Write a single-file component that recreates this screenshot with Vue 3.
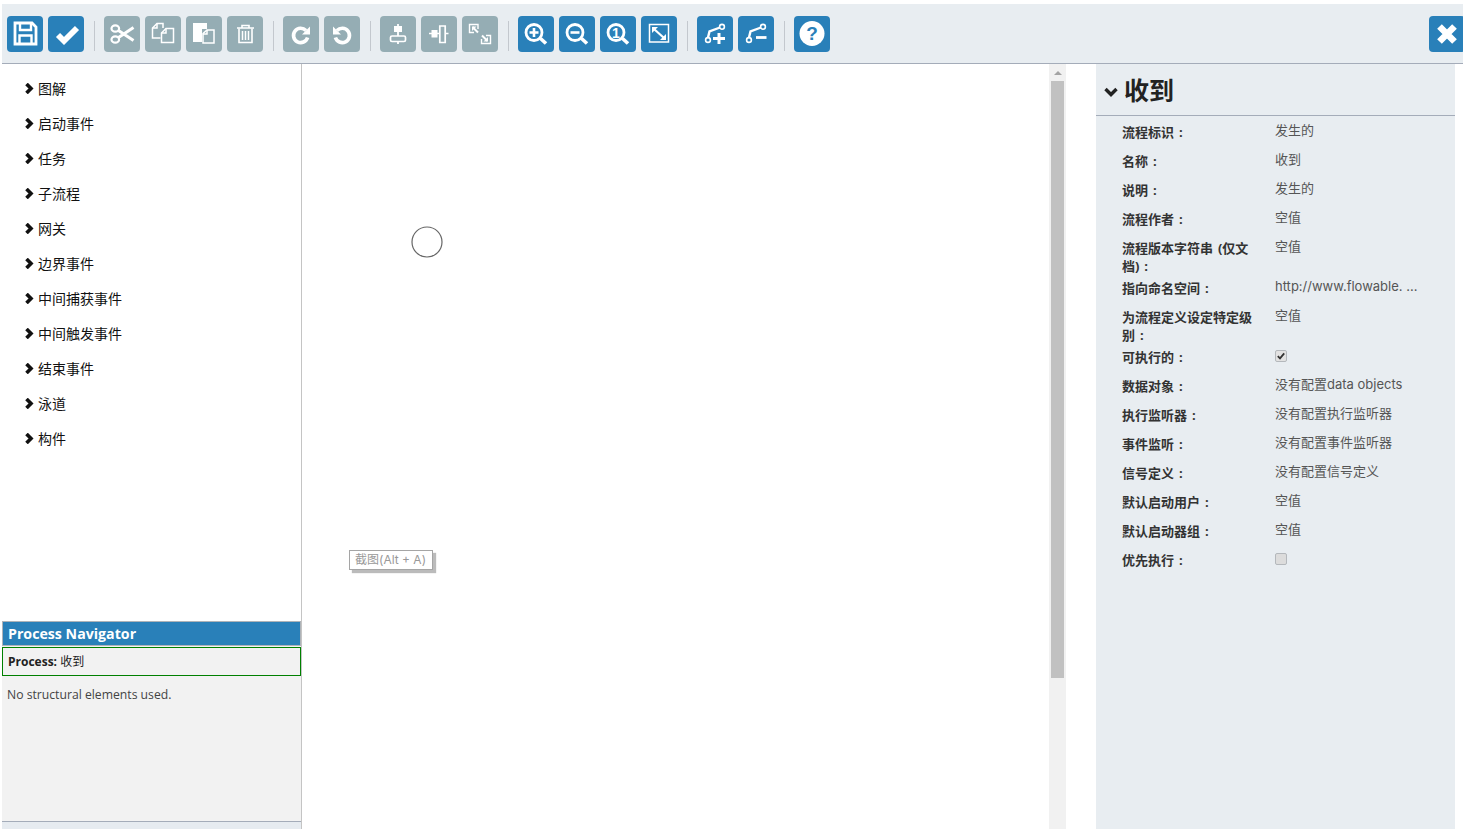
<script setup>
const saveIcon = [
  { d: 'M8 7H25L29 11V28H8Z', w: 2.8 },
  { d: 'M13 7V14H24V7', w: 2.4 },
  { d: 'M12.5 28V19.5H24.5V28', w: 2.4 }
]

const zoomLens = [
  { d: 'M8 16.5a8 8 0 1 0 16 0a8 8 0 1 0-16 0Z', w: 2.8 },
  { d: 'M22.5 22.5L28 27.5', w: 3.6 }
]

const bendPath = [
  { d: 'M11 21.5L12.5 15.5L23 11.5', w: 2.4 },
  { d: 'M8.6 24a2.4 2.4 0 1 0 4.8 0a2.4 2.4 0 1 0-4.8 0Z', w: 1.6 },
  { d: 'M22.6 10.8a2.4 2.4 0 1 0 4.8 0a2.4 2.4 0 1 0-4.8 0Z', w: 1.6 }
]

const groups = [
  [
    { name: 'save', shapes: saveIcon },
    { name: 'validate', shapes: [{ d: 'M10 19L16 25L29 12', w: 5.8 }] }
  ],
  [
    {
      name: 'cut',
      off: true,
      shapes: [
        { d: 'M7.5 12.5a3.8 3.2 0 1 0 7.6 0a3.8 3.2 0 1 0-7.6 0Z', w: 2.2 },
        { d: 'M7.5 23.5a3.8 3.2 0 1 0 7.6 0a3.8 3.2 0 1 0-7.6 0Z', w: 2.2 },
        { d: 'M14.5 14.5L29.5 24.5M14.5 21.5L29.5 11.5', w: 3 }
      ]
    },
    {
      name: 'copy',
      off: true,
      shapes: [
        { d: 'M15.5 22H7.5V12L12 7.5H18V12', w: 1.5 },
        { d: 'M12 7.5V12H7.5', w: 1.5 },
        { d: 'M16.5 17L21 12.5H28.5V26.5H16.5Z', w: 1.5 },
        { d: 'M21 12.5V17H16.5', w: 1.5 }
      ]
    },
    {
      name: 'paste',
      off: true,
      shapes: [
        { d: 'M7 7H21V13H16V26H7Z', fill: true },
        { d: 'M17 17.5L21 14H28V27H17Z', w: 1.5 },
        { d: 'M21 14V18H17', w: 1.5 }
      ]
    },
    {
      name: 'delete',
      off: true,
      shapes: [
        { d: 'M10 12H27M15 11.5V9.5H22V11.5', w: 1.6 },
        { d: 'M12 12.5V26.5H25V12.5', w: 1.6 },
        { d: 'M15.5 15V24M18.5 15V24M21.5 15V24', w: 1.5 }
      ]
    }
  ],
  [
    {
      name: 'redo',
      off: true,
      shapes: [
        { d: 'M23 14.5A7.2 7.2 0 1 0 24.6 21.5', w: 3.6 },
        { d: 'M27 10.5V18.5H19Z', fill: true }
      ]
    },
    {
      name: 'undo',
      off: true,
      shapes: [
        { d: 'M13 14.5A7.2 7.2 0 1 1 11.4 21.5', w: 3.6 },
        { d: 'M9 10.5V18.5H17Z', fill: true }
      ]
    }
  ],
  [
    {
      name: 'align-vertical',
      off: true,
      shapes: [
        { d: 'M14 10H22V16H14Z', fill: true },
        { d: 'M10.5 21.5a1.5 1.5 0 0 1 1.5-1.5H24a1.5 1.5 0 0 1 1.5 1.5V24a1.5 1.5 0 0 1-1.5 1.5H12a1.5 1.5 0 0 1-1.5-1.5Z', w: 1.7 },
        { d: 'M18 8V10M18 16V20M18 25.5V28', w: 1.8 }
      ]
    },
    {
      name: 'align-horizontal',
      off: true,
      shapes: [
        { d: 'M10.5 14H16.5V21.5H10.5Z', fill: true },
        { d: 'M18.8 10H24.2V26.5H18.8Z', w: 1.7 },
        { d: 'M8 17.5H11M16 17.5H19M24 17.5H27.5', w: 1.7 }
      ]
    },
    {
      name: 'same-size',
      off: true,
      shapes: [
        { d: 'M16 13V8.5H7.5V16.5H12', w: 1.4 },
        { d: 'M10.5 11L16 16.5', w: 2 },
        { d: 'M10 10.5H14.5L10 15Z', fill: true },
        { d: 'M19.5 23V27.5H28.5V19.5H24', w: 1.4 },
        { d: 'M20 19.5L25.5 25', w: 2 },
        { d: 'M26 25.5H21.5L26 21Z', fill: true }
      ]
    }
  ],
  [
    {
      name: 'zoom-in',
      shapes: [...zoomLens, { d: 'M11.5 16.5H20.5M16 12V21', w: 2.6 }]
    },
    {
      name: 'zoom-out',
      shapes: [...zoomLens, { d: 'M11.5 16.5H20.5', w: 2.6 }]
    },
    {
      name: 'zoom-actual',
      label: '1',
      shapes: zoomLens
    },
    {
      name: 'zoom-fit',
      shapes: [
        { d: 'M8.5 8.5H27.5V26H8.5Z', w: 1.5 },
        { d: 'M13 13L23 22', w: 2.2 },
        { d: 'M11 11H17L11 17Z', fill: true },
        { d: 'M25 24H19L25 18Z', fill: true }
      ]
    }
  ],
  [
    {
      name: 'bend-add',
      shapes: [...bendPath, { d: 'M16 22.5H28M22 17V28', w: 3 }]
    },
    {
      name: 'bend-remove',
      shapes: [...bendPath, { d: 'M18 21.5H28.5', w: 2.8 }]
    }
  ]
]

const treeItems = ['图解', '启动事件', '任务', '子流程', '网关', '边界事件', '中间捕获事件', '中间触发事件', '结束事件', '泳道', '构件']

const properties = [
  { label: '流程标识 :', value: '发生的' },
  { label: '名称 :', value: '收到' },
  { label: '说明 :', value: '发生的' },
  { label: '流程作者 :', value: '空值' },
  { label: '流程版本字符串 (仅文档) :', value: '空值' },
  { label: '指向命名空间 :', value: 'http://www.flowable. ...' },
  { label: '为流程定义设定特定级别 :', value: '空值' },
  { label: '可执行的 :', check: 'on' },
  { label: '数据对象 :', value: '没有配置data objects' },
  { label: '执行监听器 :', value: '没有配置执行监听器' },
  { label: '事件监听 :', value: '没有配置事件监听器' },
  { label: '信号定义 :', value: '没有配置信号定义' },
  { label: '默认启动用户 :', value: '空值' },
  { label: '默认启动器组 :', value: '空值' },
  { label: '优先执行 :', check: 'off' }
]
</script>

<template>
  <div class="editor">
    <header class="toolbar">
      <template v-for="(group, i) in groups" :key="i">
        <span v-if="i > 0" class="sep"></span>
        <div class="tool-group">
          <button
            v-for="tool in group"
            :key="tool.name"
            type="button"
            class="tool"
            :class="{ off: tool.off }"
            :title="tool.name"
          >
            <svg viewBox="0 0 36 36" width="36" height="36">
              <path
                v-for="(s, n) in tool.shapes"
                :key="n"
                :d="s.d"
                :fill="s.fill ? '#fff' : 'none'"
                :stroke="s.fill ? 'none' : '#fff'"
                :stroke-width="s.w"
              />
              <text v-if="tool.label" x="16" y="21.5" class="glyph-one">{{ tool.label }}</text>
            </svg>
          </button>
        </div>
      </template>
      <span class="sep"></span>
      <button type="button" class="tool" title="help">
        <svg viewBox="0 0 36 36" width="36" height="36">
          <circle cx="18" cy="17.5" r="12.5" fill="#fff" />
          <text x="18" y="24" class="glyph-help">?</text>
        </svg>
      </button>
      <button type="button" class="tool close" title="close">
        <svg viewBox="0 0 36 36" width="36" height="36">
          <path d="M10.5 10.5L25.5 25.5M25.5 10.5L10.5 25.5" fill="none" stroke="#fff" stroke-width="6.6" />
        </svg>
      </button>
    </header>

    <div class="workspace">
      <aside class="sidebar">
        <ul class="tree">
          <li v-for="item in treeItems" :key="item">
            <svg class="chev" viewBox="0 0 10 11" width="10" height="11">
              <path d="M2.5 1L7 5.5L2.5 10" fill="none" stroke="#111" stroke-width="3.6" />
            </svg>
            <span>{{ item }}</span>
          </li>
        </ul>
        <section class="navigator">
          <h2>Process Navigator</h2>
          <div class="nav-process"><b>Process:</b> <span class="cjk">收到</span></div>
          <p>No structural elements used.</p>
        </section>
        <div class="side-foot"></div>
      </aside>

      <main class="canvas">
        <svg class="start-event" viewBox="0 0 32 32" width="32" height="32">
          <circle cx="16" cy="16" r="15" fill="#fff" stroke="#666" stroke-width="1.2" />
        </svg>
        <div class="hint">截图(Alt + A)</div>
      </main>

      <div class="scrollbar">
        <div class="scroll-up"><i></i></div>
        <div class="scroll-thumb"></div>
      </div>

      <section class="props">
        <h1>
          <svg viewBox="0 0 14 10" width="14" height="10">
            <path d="M1.5 2L7 7.5L12.5 2" fill="none" stroke="#222" stroke-width="3.4" />
          </svg>
          <span>收到</span>
        </h1>
        <div class="prop-list">
          <div v-for="prop in properties" :key="prop.label" class="prop">
            <div class="prop-label">{{ prop.label }}</div>
            <div v-if="prop.check" class="prop-check" :class="prop.check">
              <svg v-if="prop.check === 'on'" viewBox="0 0 12 12" width="12" height="12">
                <path d="M2.8 6.2L5 8.4L9.2 3.4" fill="none" stroke="#333" stroke-width="1.8" />
              </svg>
            </div>
            <div v-else class="prop-value">{{ prop.value }}</div>
          </div>
        </div>
      </section>
    </div>
  </div>
</template>

<style>
html,
body {
  margin: 0;
  background: #fff;
  overflow: hidden;
}
</style>

<style scoped>
.editor {
  width: 1463px;
  height: 829px;
  overflow: hidden;
  display: flex;
  flex-direction: column;
  font-family: "Open Sans", "Noto Sans CJK SC", sans-serif;
  font-size: 13px;
  color: #333;
  background: #fff;
}

.toolbar {
  flex: none;
  height: 47px;
  margin: 4px 0 0 2px;
  padding: 12px 0 0 5px;
  display: flex;
  align-items: flex-start;
  background: #e8edf1;
  border-bottom: 1px solid #a4acb9;
}

.tool-group {
  display: flex;
  gap: 5px;
}

.tool {
  flex: none;
  width: 36px;
  height: 36px;
  padding: 0;
  border: none;
  border-radius: 4px;
  background: #2980b9;
  cursor: pointer;
}

.tool svg {
  display: block;
}

.tool.off {
  background: #95adb4;
}

.tool.close {
  margin-left: auto;
  margin-right: -2px;
}

.sep {
  flex: none;
  width: 1px;
  height: 30px;
  margin: 5px 9px 0 10px;
  background: #c3c8ce;
}

.glyph-one,
.glyph-help {
  font-family: "Liberation Sans", sans-serif;
  font-weight: 700;
  text-anchor: middle;
}

.glyph-one {
  font-size: 14px;
  fill: #fff;
}

.glyph-help {
  font-size: 19px;
  fill: #2980b9;
}

.workspace {
  flex: 1;
  min-height: 0;
  display: flex;
}

.sidebar {
  flex: none;
  width: 299px;
  margin-left: 2px;
  display: flex;
  flex-direction: column;
  border-right: 1px solid #c4c4c4;
}

.tree {
  flex: 1;
  margin: 0;
  padding: 7px 0 0 22px;
  list-style: none;
  font-size: 14px;
  color: #111;
}

.tree li {
  height: 35px;
  display: flex;
  align-items: center;
  gap: 4px;
  line-height: 35px;
}

.tree .chev {
  flex: none;
}

.navigator {
  flex: none;
  height: 200px;
  box-sizing: border-box;
  background: #f2f2f2;
}

.navigator h2 {
  margin: 0;
  height: 25px;
  box-sizing: border-box;
  padding-left: 5px;
  font-size: 14.2px;
  line-height: 23px;
  font-weight: 700;
  color: #fff;
  background: #2980b9;
  border: 1px solid #aeb3b8;
}

.nav-process {
  margin-top: 1px;
  height: 29px;
  box-sizing: border-box;
  padding-left: 5px;
  line-height: 27px;
  font-size: 12px;
  color: #222;
  border: 1px solid #008000;
}

.navigator p {
  margin: 10px 0 0 5px;
  font-size: 12.2px;
  line-height: 18px;
  color: #444;
}

.side-foot {
  flex: none;
  height: 7px;
  background: #e6ebf0;
  border-top: 1px solid #a4acb9;
}

.canvas {
  flex: none;
  position: relative;
  width: 747px;
}

.start-event {
  position: absolute;
  left: 109px;
  top: 162px;
}

.hint {
  position: absolute;
  left: 47px;
  top: 486px;
  height: 20px;
  padding: 0 5px;
  box-sizing: border-box;
  width: 84px;
  font-family: Inter, "Noto Sans CJK SC", sans-serif;
  font-size: 12px;
  line-height: 18px;
  white-space: nowrap;
  color: #999;
  background: #fff;
  border: 1px solid #a5a5a5;
  box-shadow: 3px 3px 1px #bbb;
}

.scrollbar {
  flex: none;
  width: 17px;
  background: #f1f1f1;
}

.scroll-up {
  height: 17px;
  display: flex;
  align-items: center;
  justify-content: center;
}

.scroll-up i {
  width: 0;
  height: 0;
  border-left: 4px solid transparent;
  border-right: 4px solid transparent;
  border-bottom: 4px solid #a3a3a3;
}

.scroll-thumb {
  height: 597px;
  margin: 0 2px;
  background: #c1c1c1;
}

.props {
  flex: none;
  width: 359px;
  margin-left: 30px;
  background: #e8edf1;
}

.props h1 {
  margin: 0;
  padding: 0 0 2px 9px;
  height: 49px;
  display: flex;
  align-items: center;
  gap: 6px;
  font-size: 25px;
  font-weight: 700;
  color: #222;
  border-bottom: 1px solid #a4acb9;
}

.props h1 svg {
  flex: none;
  margin: 6px 0 0 -1px;
}

.prop-list {
  padding: 3px 0 0 26px;
}

.prop {
  display: flex;
  min-height: 29px;
  box-sizing: border-box;
  padding-top: 4px;
  line-height: 18px;
}

.prop-label {
  flex: none;
  width: 153px;
  padding-right: 20px;
  box-sizing: border-box;
  font-weight: 700;
  word-spacing: 1.5px;
  color: #333;
}

.prop-value {
  margin-top: -2px;
  font-family: Inter, "Noto Sans CJK SC", sans-serif;
  color: #555;
}

.prop-check {
  width: 12px;
  height: 12px;
  margin-top: 2px;
  box-sizing: border-box;
  border: 1px solid #b4b8bc;
  border-radius: 2px;
  background: #e2e2e2;
  overflow: hidden;
}

.prop-check svg {
  display: block;
  margin: -1px;
}

.prop-check.off {
  background: #dcdcdc;
}
</style>
